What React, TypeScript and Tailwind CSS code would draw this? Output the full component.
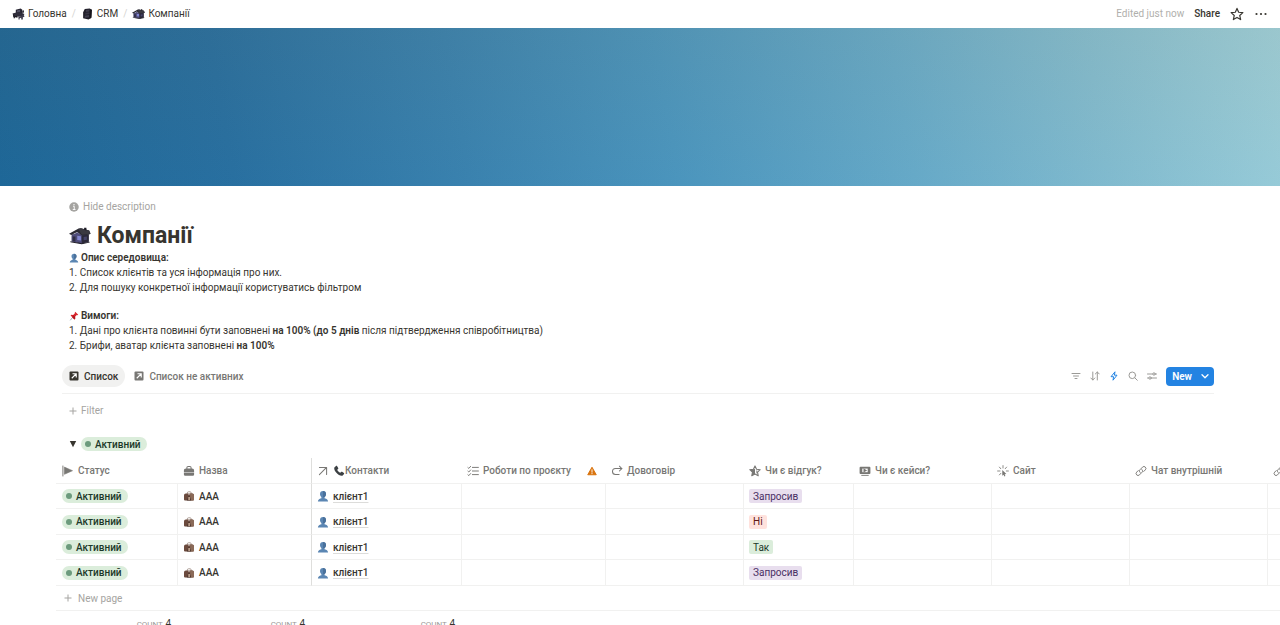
import type { ReactNode } from 'react';

type IconProps = { className?: string };

/* ---------- Page icons ---------- */

function HouseIcon({ className }: IconProps) {
  return (
    <svg viewBox="0 0 24 18" className={className} aria-hidden="true">
      <path d="M3 7h18.500v8L14 17.500 3 15z" fill="#3a3857" />
      <path d="M0 6.500 10 1l3-.5L22 3l1.500 3.500-2 1.200-8 .8L9 4.500 2.500 8z" fill="#2b2a33" />
      <path d="M13 .5 22 3l1.500 3.500-9.500 1L10 1z" fill="#3a3941" />
      <path d="M16.500 0h2.500v3l-2.500-.8z" fill="#1c1a24" />
      <path d="M3 8.500 9 5l5 3.500v8L3 14.800z" fill="#4f4d7a" />
      <path d="M4 9.500h3v5.500l-3-.5z" fill="#2f2d42" />
      <path d="M9 8.800l4 .4v4.600l-4-.5z" fill="#8286d0" />
      <path d="M14 8.500l7.500-1v8L14 17z" fill="#2b2939" />
      <path d="M16 10l3.500-.5v3.500l-3.500.7z" fill="#46446a" />
      <path d="M1.500 14.800 14 17l8.500-1.800v1L14 18 1.500 15.800z" fill="#1c1a24" />
    </svg>
  );
}

function DeskIcon({ className }: IconProps) {
  return (
    <svg viewBox="0 0 24 22" className={className} aria-hidden="true">
      <path d="M7 3l9-2 3 2v6l-9 2-3-2z" fill="#25232f" />
      <path d="M9 4.500l6-1.300v4L9 8.600z" fill="#565468" />
      <path d="M1 10l12-3 10 4-2 3-10 2-9-3z" fill="#302e3c" />
      <path d="M2 12l8 3v3l-8-2z" fill="#1b1a22" />
      <path d="M12 16l10-3 1 3-3 1v4h-3v-3l-3 1v2h-2z" fill="#3d3b4b" />
      <path d="M3 15h2.400v4H3zM19 5l3-1v4l-3 1z" fill="#22202b" />
    </svg>
  );
}

function CabinetIcon({ className }: IconProps) {
  return (
    <svg viewBox="0 0 20 22" className={className} aria-hidden="true">
      <path d="M5 2l9-1 4 2-1 15-5 3-10-2V8z" fill="#211f29" />
      <path d="M7 3.600l7-.8v3.400l-7 1z" fill="#3c3a49" />
      <path d="M6 8.600l8-1v3.600l-8 1z" fill="#353342" />
      <path d="M5 14l8-1v4l-8 1z" fill="#3f3d4d" />
      <path d="M14 2.800l4 .4-1 14.600-3 2z" fill="#15141b" />
    </svg>
  );
}

function PersonIcon({ className }: IconProps) {
  return (
    <svg viewBox="0 0 20 20" className={className} aria-hidden="true">
      <path
        d="M10 1.500c3.200 0 5 2.200 5 5 0 2.200-1 4-2.300 5v2.100c1.300.8 5.600 1.200 5.800 5.400H1.500c.2-4.200 4.500-4.600 5.800-5.400v-2.100C6 10.500 5 8.700 5 6.500c0-2.800 1.800-5 5-5z"
        fill="#5b86b3"
      />
      <path d="M10 1.500c3.200 0 5 2.200 5 5 0 2.200-1 4-2.300 5L10 12z" fill="#4a719b" />
    </svg>
  );
}

function PinIcon({ className }: IconProps) {
  return (
    <svg viewBox="0 0 20 20" className={className} aria-hidden="true">
      <path d="M7.500 12.500 3 18" stroke="#8b98a3" strokeWidth="1.600" strokeLinecap="round" />
      <path d="M12.500 1.500 18.500 7.500l-1.800 1-1.200-.3-3.300 3.500.2 3.800-1.500 1.300L3.200 9.100l1.300-1.500 3.800.2 3.500-3.300-.3-1.200z" fill="#d8282f" />
      <path d="M8.300 7.800l3.900 3.900.2 3.800-1.500 1.300-3.900-3.900z" fill="#b3161f" />
    </svg>
  );
}

function PhoneIcon({ className }: IconProps) {
  return (
    <svg viewBox="0 0 20 20" className={className} aria-hidden="true">
      <path
        d="M2.200 4.200 5 1.600c.6-.5 1.300-.4 1.700.2l2 3c.4.600.3 1.300-.3 1.800L7 7.800c.9 2 3 4.100 5.100 5.200l1.300-1.400c.5-.5 1.200-.6 1.800-.2l3 2c.6.400.7 1.200.2 1.700l-2.700 2.800C10.500 19.500.5 10 2.200 4.200z"
        fill="#3c4043"
      />
    </svg>
  );
}

function CompanyIcon({ className }: IconProps) {
  return (
    <svg viewBox="0 0 22 20" className={className} aria-hidden="true">
      <path d="M7.500 6V4c0-1.500 1-2.500 2.500-2.500h3c1.500 0 2.500 1 2.500 2.500v2" fill="none" stroke="#a08d84" strokeWidth="1.600" />
      <path d="M1 9c0-2.200 1.500-4 3.500-4h13C19.500 5 21 6.800 21 9v8a2 2 0 0 1-2 2H3a2 2 0 0 1-2-2z" fill="#6b4a3d" />
      <path d="M13 5h4.500C19.500 5 21 6.800 21 9v8a2 2 0 0 1-2 2h-5z" fill="#8a6a58" />
      <path d="M6.500 19 11 8l4.500 11z" fill="#4a352e" />
      <path d="M9.500 12h3.500v6H9.500z" fill="#b99c88" />
      <path d="M9 5h4l-2 4z" fill="#d9cec7" />
    </svg>
  );
}

/* ---------- Property icons ---------- */

function StatusIcon() {
  return (
    <svg viewBox="0 0 20 20" className="size-3 shrink-0" aria-hidden="true">
      <path d="M1.500 1v18" stroke="currentColor" strokeWidth="1.600" />
      <path d="M4 3.500 17.500 9.500 4 15.500z" fill="currentColor" stroke="currentColor" strokeLinejoin="round" />
    </svg>
  );
}

function BagIcon() {
  return (
    <svg viewBox="0 0 20 20" className="size-3 shrink-0" aria-hidden="true">
      <path d="M6.500 7V4.500c0-1.300.7-2 2-2h3c1.300 0 2 .7 2 2V7" fill="none" stroke="currentColor" strokeWidth="1.700" />
      <path d="M5 6h10c2.200 0 3.500 1.500 3.500 3.500v2.800h-17V9.500C1.500 7.500 2.800 6 5 6zM1.500 13.300h17V16a2 2 0 0 1-2 2h-13a2 2 0 0 1-2-2z" fill="currentColor" />
    </svg>
  );
}

function ArrowIcon() {
  return (
    <svg viewBox="0 0 20 20" className="size-3 shrink-0" fill="none" stroke="currentColor" strokeWidth="1.700" aria-hidden="true">
      <path d="M4 4h12v12M15.500 4.500 4 16" strokeLinecap="round" strokeLinejoin="round" />
    </svg>
  );
}

function ChecklistIcon() {
  return (
    <svg viewBox="0 0 20 20" className="size-3 shrink-0" fill="none" stroke="currentColor" strokeWidth="1.600" strokeLinecap="round" strokeLinejoin="round" aria-hidden="true">
      <path d="M9 4h10M9 10h10M9 16h10" />
      <path d="M1.500 4.300 3 5.700 6 2.300M1.500 10.300 3 11.700 6 8.300M1.500 16.300 3 17.700 6 14.300" />
    </svg>
  );
}

function RedoIcon() {
  return (
    <svg viewBox="0 0 20 20" className="size-3 shrink-0" fill="none" stroke="currentColor" strokeWidth="1.700" strokeLinecap="round" strokeLinejoin="round" aria-hidden="true">
      <path d="M18 6H7.500a5 5 0 0 0 0 10h6" />
      <path d="M14 2l4 4-4 4" />
    </svg>
  );
}

function HalfStarIcon() {
  return (
    <svg viewBox="0 0 20 20" className="size-3 shrink-0" aria-hidden="true">
      <path d="M10 1.500l2.600 5.600 6.100.7-4.500 4.200 1.200 6L10 15l-5.400 3 1.200-6L1.300 7.800l6.100-.7z" fill="none" stroke="currentColor" strokeWidth="1.800" strokeLinejoin="round" />
      <path d="M10 6.500V15l-5.400 3 1.200-6L1.300 7.800l6.100-.7z" fill="currentColor" />
      <path d="M13 9v5" stroke="currentColor" strokeWidth="1.400" />
    </svg>
  );
}

function VideoIcon() {
  return (
    <svg viewBox="0 0 20 20" className="size-3 shrink-0" aria-hidden="true">
      <path d="M2.500 3h15A1.500 1.500 0 0 1 19 4.500v9a1.500 1.500 0 0 1-1.500 1.500h-15A1.500 1.500 0 0 1 1 13.500v-9A1.500 1.500 0 0 1 2.500 3z" fill="currentColor" />
      <path d="M5.500 6h9v6h-9z" fill="#fff" />
      <path d="M7.500 5.500v7L13.500 9z" fill="currentColor" />
      <path d="M4.500 17.300h11" stroke="currentColor" strokeWidth="1.500" strokeLinecap="round" />
    </svg>
  );
}

function ClickIcon() {
  return (
    <svg viewBox="0 0 20 20" className="size-3 shrink-0" aria-hidden="true">
      <path d="M10 1v4M4 3.500l2.300 2.700M16 3.500l-2.300 2.700M1 10h4M19 10h-3.500M4 16.500l2.500-2.700" stroke="currentColor" strokeWidth="1.400" strokeLinecap="round" />
      <path d="M8.800 8.300v9.500l2.200-1.700 1.300 3 1.700-.8-1.300-2.900 2.900-.4z" fill="currentColor" />
    </svg>
  );
}

function LinkIcon() {
  return (
    <svg viewBox="0 0 20 20" className="size-3 shrink-0" fill="none" stroke="currentColor" strokeWidth="1.600" strokeLinecap="round" aria-hidden="true">
      <path d="M8.500 12.500c-1.500-1.300-1.500-3.300-.2-4.600l4.300-4.400a3.200 3.200 0 0 1 4.600 4.600l-2.700 2.700" />
      <path d="M11.500 7.500c1.500 1.300 1.500 3.300.2 4.600l-4.300 4.400a3.200 3.200 0 0 1-4.600-4.600l2.700-2.700" />
    </svg>
  );
}

function WarningIcon() {
  return (
    <svg viewBox="0 0 20 20" className="size-2.5 shrink-0" aria-hidden="true">
      <path d="M10 2.500 18.500 17.500h-17z" fill="#d9730d" stroke="#d9730d" strokeWidth="2" strokeLinejoin="round" />
      <path d="M10 7.500v5" stroke="#fff" strokeWidth="1.800" strokeLinecap="round" />
      <circle cx="10" cy="15.200" r="1.100" fill="#fff" />
    </svg>
  );
}

function ViewIcon() {
  return (
    <svg viewBox="0 0 20 20" className="size-2.5 shrink-0" aria-hidden="true">
      <rect x="1" y="1" width="18" height="18" rx="2" fill="currentColor" />
      <path d="M7 5.500h7.500V13M14 6l-8.500 8.500" fill="none" stroke="#fff" strokeWidth="2.200" />
    </svg>
  );
}

function PlusIcon() {
  return (
    <svg viewBox="0 0 8 8" className="size-2 shrink-0" stroke="currentColor" aria-hidden="true">
      <path d="M4 .5v7M.5 4h7" />
    </svg>
  );
}

/* ---------- Data ---------- */

const breadcrumbs = [
  { name: 'Головна', icon: <DeskIcon className="h-3 w-[13px]" /> },
  { name: 'CRM', icon: <CabinetIcon className="h-3 w-[13px]" /> },
  { name: 'Компанії', icon: <HouseIcon className="h-3 w-[13px]" /> },
];

const columns: { id: string; name: string; icon: ReactNode; width: string; count?: boolean; warning?: boolean }[] = [
  { id: 'status', name: 'Статус', icon: <StatusIcon />, width: 'w-[122px]', count: true },
  { id: 'name', name: 'Назва', icon: <BagIcon />, width: 'w-[134px]', count: true },
  { id: 'contacts', name: 'Контакти', icon: <ArrowIcon />, width: 'w-[150px]', count: true },
  { id: 'works', name: 'Роботи по проєкту', icon: <ChecklistIcon />, width: 'w-36', warning: true },
  { id: 'contract', name: 'Довоговір', icon: <RedoIcon />, width: 'w-[138px]' },
  { id: 'review', name: 'Чи є відгук?', icon: <HalfStarIcon />, width: 'w-[110px]' },
  { id: 'cases', name: 'Чи є кейси?', icon: <VideoIcon />, width: 'w-[138px]' },
  { id: 'site', name: 'Сайт', icon: <ClickIcon />, width: 'w-[138px]' },
  { id: 'chat', name: 'Чат внутрішній', icon: <LinkIcon />, width: 'w-[138px]' },
  { id: 'link', name: '', icon: <LinkIcon />, width: 'w-[138px]' },
];

const rows = [
  { id: 1, name: 'AAA', contact: 'клієнт1', review: 'Запросив', tag: 'bg-[#e8deee] text-[#492f64]' },
  { id: 2, name: 'AAA', contact: 'клієнт1', review: 'Ні', tag: 'bg-[#ffe2dd] text-[#5d1715]' },
  { id: 3, name: 'AAA', contact: 'клієнт1', review: 'Так', tag: 'bg-[#dbeddb] text-[#1c3829]' },
  { id: 4, name: 'AAA', contact: 'клієнт1', review: 'Запросив', tag: 'bg-[#e8deee] text-[#492f64]' },
];

type Row = (typeof rows)[number];

/* ---------- Components ---------- */

function StatusPill() {
  return (
    <span className="inline-flex h-3.5 items-center gap-1 rounded-full bg-[#dbeddb] pr-1.5 pl-1 font-medium text-[#1c3829]">
      <span className="size-1.5 rounded-full bg-[#6c9b7d]" />
      Активний
    </span>
  );
}

function Cell({ id, row }: { id: string; row: Row }) {
  if (id === 'status') return <StatusPill />;
  if (id === 'name') {
    return (
      <a href="#company" className="flex items-center gap-1 font-medium">
        <CompanyIcon className="h-2.5 w-3" />
        {row.name}
      </a>
    );
  }
  if (id === 'contacts') {
    return (
      <a href="#contact" className="flex items-center gap-1 font-medium">
        <PersonIcon className="size-3" />
        <span className="underline decoration-[#dcdcda] underline-offset-2">{row.contact}</span>
      </a>
    );
  }
  if (id === 'review') {
    return <span className={`inline-flex h-3.5 items-center rounded-xs px-1 ${row.tag}`}>{row.review}</span>;
  }
  return null;
}

function TopBar() {
  return (
    <header className="flex h-7 shrink-0 items-center justify-between px-3 pb-px">
      <nav className="flex items-center gap-[5px]" aria-label="Breadcrumb">
        {breadcrumbs.map((item, i) => (
          <div key={item.name} className="flex items-center gap-[5px]">
            {i > 0 && <span className="text-[#d5d4d1]">/</span>}
            <a href="#page" className="flex items-center gap-[3px]">
              {item.icon}
              {item.name}
            </a>
          </div>
        ))}
      </nav>
      <div className="flex items-center gap-2.5">
        <span className="text-[#b0afac]">Edited just now</span>
        <button type="button" className="font-medium">Share</button>
        <button type="button" aria-label="Favorite">
          <svg viewBox="0 0 20 20" className="size-3.5" fill="none" stroke="currentColor" strokeWidth="1.700" strokeLinejoin="round">
            <path d="M10 2l2.400 5.500 6 .6-4.500 4 1.300 5.900L10 14.900 4.800 18l1.300-5.900-4.500-4 6-.6z" />
          </svg>
        </button>
        <button type="button" aria-label="More">
          <svg viewBox="0 0 14 14" className="size-3.5" fill="currentColor">
            <circle cx="2.500" cy="7" r="1.100" />
            <circle cx="7" cy="7" r="1.100" />
            <circle cx="11.500" cy="7" r="1.100" />
          </svg>
        </button>
      </div>
    </header>
  );
}

function Toolbar() {
  return (
    <div className="flex h-[35px] items-center justify-between border-b border-[#f1f1f0]">
      <div className="flex items-center gap-0.5 font-medium">
        <button type="button" className="flex h-[22px] items-center gap-[5px] rounded-full bg-[#f1f1f0] px-[7px]">
          <ViewIcon />
          Список
        </button>
        <button type="button" className="flex h-[22px] items-center gap-[5px] rounded-full px-[7px] text-[#787774]">
          <ViewIcon />
          Список не активних
        </button>
      </div>
      <div className="flex items-center gap-[9px] text-[#9b9a97]">
        <button type="button" aria-label="Filter">
          <svg viewBox="0 0 10 10" className="size-2.5" stroke="currentColor" strokeLinecap="round">
            <path d="M1 2.500h8M2.500 5h5M4 7.500h2" />
          </svg>
        </button>
        <button type="button" aria-label="Sort">
          <svg viewBox="0 0 10 10" className="size-2.5" fill="none" stroke="currentColor" strokeLinecap="round" strokeLinejoin="round">
            <path d="M2.800 1v8M.8 7l2 2 2-2M7.300 9V1M5.300 3l2-2 2 2" />
          </svg>
        </button>
        <button type="button" aria-label="Automations" className="text-[#2383e2]">
          <svg viewBox="0 0 10 10" className="size-2.5" fill="none" stroke="currentColor" strokeLinejoin="round">
            <path d="M6 .8 2 5.700h2.600L4 9.200l4-5H5.400z" />
          </svg>
        </button>
        <button type="button" aria-label="Search">
          <svg viewBox="0 0 10 10" className="size-2.5" fill="none" stroke="currentColor" strokeLinecap="round">
            <circle cx="4.300" cy="4.300" r="3.300" />
            <path d="M6.800 6.800 9.300 9.300" />
          </svg>
        </button>
        <button type="button" aria-label="View settings">
          <svg viewBox="0 0 10 10" className="size-2.5" fill="none" stroke="currentColor" strokeLinecap="round">
            <path d="M.5 3h5M8.500 3h1M.5 7h1M4.500 7h5" />
            <circle cx="7" cy="3" r="1.200" />
            <circle cx="3" cy="7" r="1.200" />
          </svg>
        </button>
        <div className="flex h-[19px] items-center rounded bg-[#2383e2] text-white">
          <button type="button" className="pl-1.5 font-semibold">New</button>
          <button type="button" aria-label="New options" className="pr-1 pl-2">
            <svg viewBox="0 0 10 10" className="size-2.5" fill="none" stroke="currentColor" strokeWidth="1.300" strokeLinecap="round" strokeLinejoin="round">
              <path d="M2 3.700l3 3 3-3" />
            </svg>
          </button>
        </div>
      </div>
    </div>
  );
}

function CompaniesTable() {
  return (
    <div className="overflow-hidden">
      <table className="w-[1350px] table-fixed border-separate border-spacing-0">
        <thead>
          <tr className="h-[26px] text-left text-[#787774]">
            {columns.map((col) => (
              <th
                key={col.id}
                className={`border-b border-[#f1f1f0] px-[5px] font-medium whitespace-nowrap first:pl-1.5 ${col.width} ${
                  col.id === 'name' ? 'border-r border-r-[#dededc]' : ''
                }`}
              >
                <div className="flex items-center gap-1">
                  {col.icon}
                  {col.id === 'contacts' && <PhoneIcon className="-mr-1 size-3" />}
                  <span>{col.name}</span>
                  {col.warning && (
                    <span className="ml-auto pr-1">
                      <WarningIcon />
                    </span>
                  )}
                </div>
              </th>
            ))}
          </tr>
        </thead>
        <tbody>
          {rows.map((row) => (
            <tr key={row.id} className="odd:h-[25px] even:h-[26px]">
              {columns.map((col) => (
                <td
                  key={col.id}
                  className={`border-r border-b border-[#f1f1f0] px-[5px] first:pl-1.5 ${
                    col.id === 'name' ? 'border-r-[#dededc]' : ''
                  }`}
                >
                  <div className="flex items-center">
                    <Cell id={col.id} row={row} />
                  </div>
                </td>
              ))}
            </tr>
          ))}
        </tbody>
        <tfoot>
          <tr className="h-[25px]">
            <td colSpan={columns.length} className="border-b border-[#f1f1f0] px-2 text-[#a5a4a1]">
              <button type="button" className="flex items-center gap-1.5">
                <PlusIcon />
                New page
              </button>
            </td>
          </tr>
          <tr className="h-[25px]">
            {columns.map((col) => (
              <td key={col.id} className="px-[7px] text-right">
                {col.count && (
                  <>
                    <span className="text-[8px] text-[#9b9a97]">COUNT</span> <span>4</span>
                  </>
                )}
              </td>
            ))}
          </tr>
        </tfoot>
      </table>
    </div>
  );
}

export default function App() {
  return (
    <div className="flex h-screen flex-col overflow-hidden bg-white font-['Roboto','Inter',sans-serif] text-[10px] leading-[15px] text-[#37352f]">
      <TopBar />
      <div className="h-[158px] shrink-0 bg-[linear-gradient(to_bottom,rgba(90,90,60,0.08),rgba(0,130,200,0.04)),linear-gradient(80deg,#1f6696_0%,#2a6f9f_18%,#3c82ae_36%,#4e96bd_52%,#6aabc8_70%,#86bdcf_85%,#a0d0da_100%)]" />

      <main className="shrink-0">
        <div className="pr-[66px] pl-[62px]">
          <section className="px-[7px] pt-[13px]">
            <button type="button" className="flex items-center gap-1 text-[#a5a4a1]">
              <svg viewBox="0 0 20 20" className="size-2.5">
                <circle cx="10" cy="10" r="9.500" fill="currentColor" />
                <path d="M8 8.500h2.500V15M7.500 15h5.500" fill="none" stroke="#fff" strokeWidth="1.800" />
                <circle cx="10" cy="5.300" r="1.400" fill="#fff" />
              </svg>
              Hide description
            </button>
            <h1 className="mt-2 flex items-center gap-1.5 text-[23px] leading-7 font-bold">
              <HouseIcon className="h-5 w-[22px]" />
              Компанії
            </h1>
            <div>
              <h2 className="flex items-center gap-0.5 font-semibold">
                <PersonIcon className="size-2.5" />
                Опис середовища:
              </h2>
              <p>1. Список клієнтів та уся інформація про них.</p>
              <p>2. Для пошуку конкретної інформації користуватись фільтром</p>
            </div>
            <div className="mt-[13px]">
              <h2 className="flex items-center gap-0.5 font-semibold">
                <PinIcon className="size-2.5" />
                Вимоги:
              </h2>
              <p>
                1. Дані про клієнта повинні бути заповнені <b className="font-semibold">на 100% (до 5 днів</b> після
                підтвердження співробітництва)
              </p>
              <p>
                2. Брифи, аватар клієнта заповнені <b className="font-semibold">на 100%</b>
              </p>
            </div>
          </section>

          <div className="mt-1.5">
            <Toolbar />
          </div>

          <div className="px-[7px] pt-[9px]">
            <button type="button" className="flex items-center gap-1 text-[#a5a4a1]">
              <PlusIcon />
              Filter
            </button>
          </div>
          <div className="flex items-center gap-1 px-[7px] pt-[19px]">
            <button type="button" aria-label="Toggle group">
              <svg viewBox="0 0 8 8" className="size-2" fill="currentColor">
                <path d="M.8 1h6.400L4 7.300z" />
              </svg>
            </button>
            <StatusPill />
          </div>
        </div>

        <div className="mt-[7px] pl-14">
          <CompaniesTable />
        </div>
      </main>
    </div>
  );
}
